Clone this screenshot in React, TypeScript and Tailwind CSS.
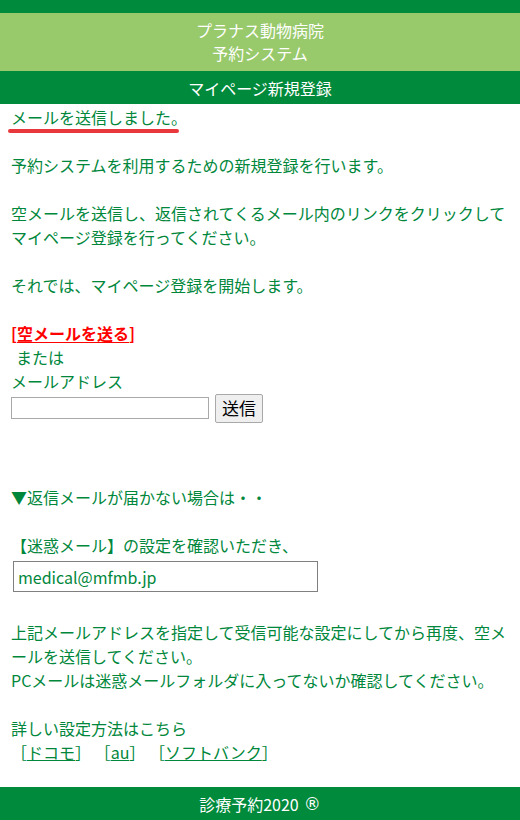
import React from "react";

const Blank = () => <div className="h-6" />;

export default function App() {
  return (
    <div className="flex min-h-[820px] w-[520px] flex-col bg-white font-['Noto_Sans_CJK_JP','Noto_Sans',sans-serif] text-[16px] leading-6 text-[#00873c]">
      <div className="h-[13px] bg-[#008a3b]" />
      <div className="flex h-[58px] flex-col items-center justify-center bg-[#98c96b] text-white leading-[23px]">
        <div>プラナス動物病院</div>
        <div>予約システム</div>
      </div>
      <div className="flex h-[33px] items-center justify-center bg-[#008a3b] text-white">マイページ新規登録</div>

      <div className="flex-1 px-[11px] pt-px">
        <div className="relative w-fit">
          メールを送信しました。
          <div className="absolute -left-[3px] right-[8px] top-[24px] h-[4px] rounded-sm bg-[#e8383d]" />
        </div>
        <Blank />
        <div>予約システムを利用するための新規登録を行います。</div>
        <Blank />
        <div>空メールを送信し、返信されてくるメール内のリンクをクリックしてマイページ登録を行ってください。</div>
        <Blank />
        <div>それでは、マイページ登録を開始します。</div>
        <Blank />
        <div className="font-bold text-[#ff0000]">
          [<span className="underline underline-offset-2">空メールを送る</span>]
        </div>
        <div className="pl-[5px]">または</div>
        <div>メールアドレス</div>
        <div className="flex h-[30px] items-center gap-[6px]">
          <input type="text" className="h-[22px] w-[198px] border border-[#a9a9a9] bg-white px-1 text-black" />
          <button className="h-[29px] w-[48px] rounded-[2px] border border-[#a9a9a9] bg-[#efefef] text-[17px] text-black">
            送信
          </button>
        </div>

        <div className="mt-[62px]">▼返信メールが届かない場合は・・</div>
        <Blank />
        <div>【迷惑メール】の設定を確認いただき、</div>
        <div className="ml-[2px] mt-[4px] flex h-[31px] w-[305px] items-center border border-[#808080] px-[4px]">
          medical@mfmb.jp
        </div>
        <div className="mt-[28px]">
          上記メールアドレスを指定して受信可能な設定にしてから再度、空メールを送信してください。
        </div>
        <div>PCメールは迷惑メールフォルダに入ってないか確認してください。</div>
        <Blank />
        <div>詳しい設定方法はこちら</div>
        <div>
          ［<span className="underline">ドコモ</span>］ ［<span className="underline">au</span>］ ［
          <span className="underline">ソフトバンク</span>］
        </div>
      </div>

      <div className="flex h-[33px] items-center justify-center bg-[#008a3b] text-white">
        診療予約2020 <span className="ml-[5px] font-['DejaVu_Sans',sans-serif] text-[17px]">®</span>
      </div>
    </div>
  );
}
